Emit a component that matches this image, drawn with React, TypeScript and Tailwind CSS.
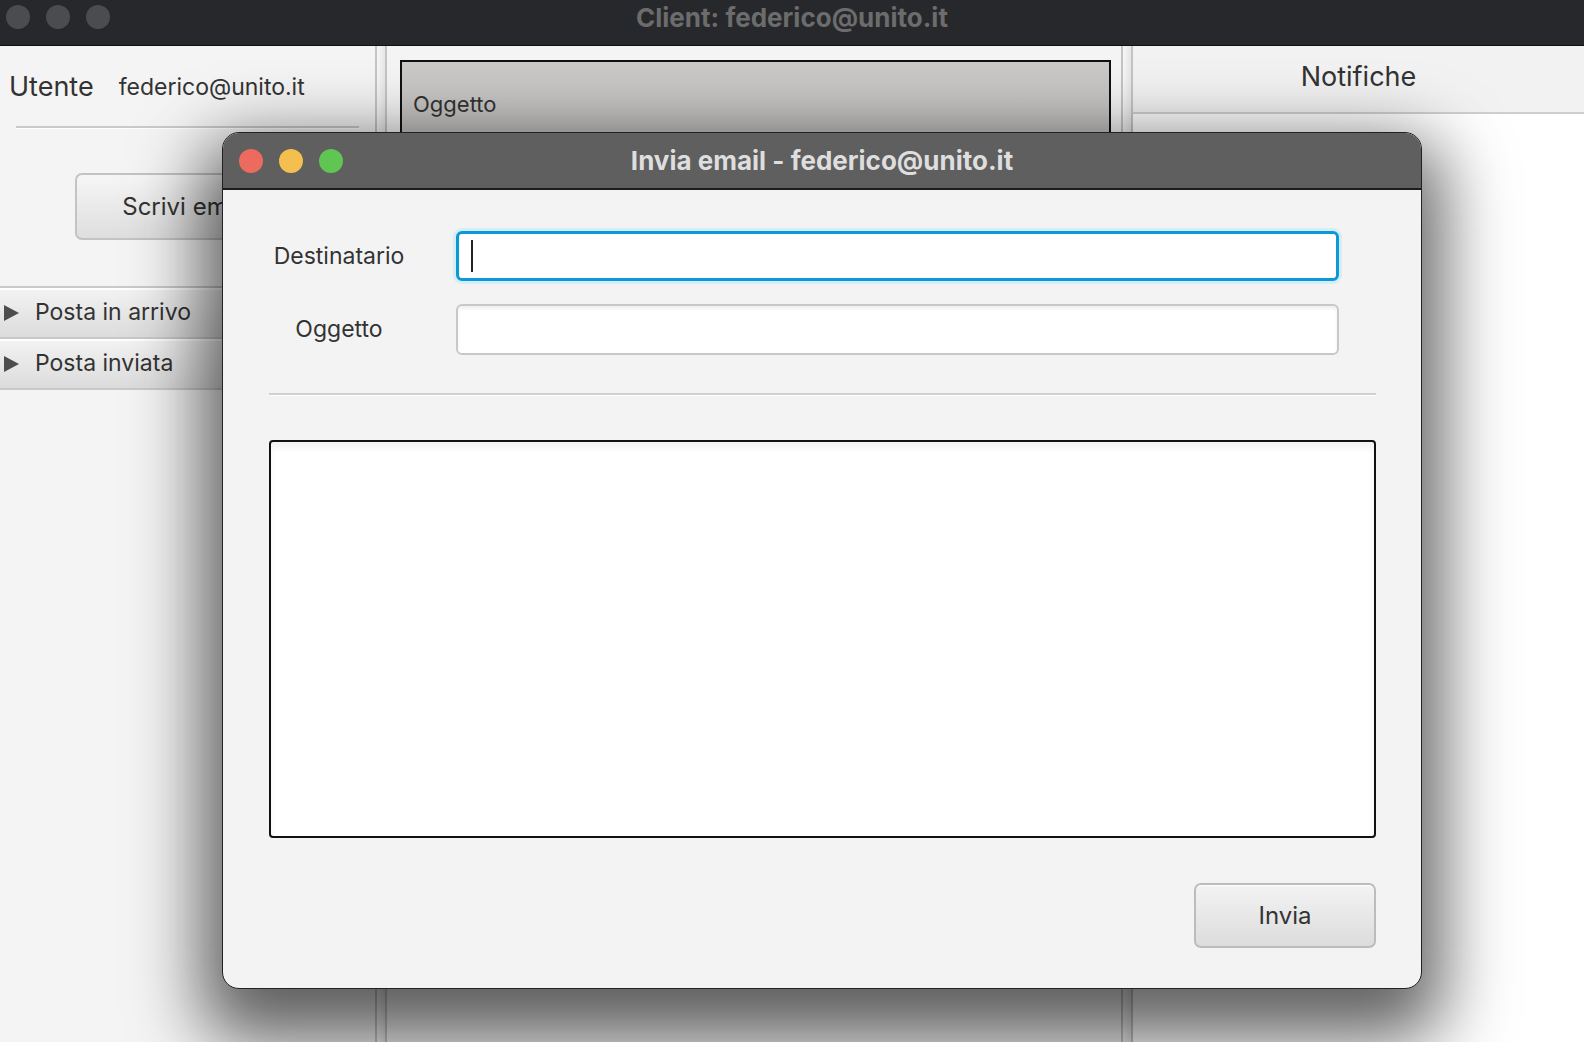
import React from 'react';

const font = { fontFamily: 'Inter, "Noto Sans", sans-serif' };

const Lights: React.FC<{ colors: string[] }> = ({ colors }) => (
  <div className="flex items-center gap-4">
    {colors.map((c, i) => (
      <span key={i} className={`h-[24px] w-[24px] rounded-full ${c}`} />
    ))}
  </div>
);

const TreeRow: React.FC<{ label: string }> = ({ label }) => (
  <div className="flex h-[51px] items-center gap-4 border-t-2 border-[#c9c9c9] bg-gradient-to-b from-[#f3f3f3] to-[#dcdcdc] pl-[4px] shadow-[inset_0_2px_0_#ffffff]">
    <svg width="15" height="16" viewBox="0 0 15 16">
      <path d="M0 0 L15 8 L0 16 Z" fill="#4d4d4d" />
    </svg>
    <span className="text-[23px] text-[#333]">{label}</span>
  </div>
);

const Divider = () => (
  <div className="flex w-[12px] shrink-0 bg-[#ececec]">
    <div className="w-[2px] bg-[#c4c4c4]" />
    <div className="flex-1 bg-gradient-to-r from-[#f6f6f6] to-[#e6e6e6]" />
    <div className="w-[2px] bg-[#c4c4c4]" />
  </div>
);

function ComposeDialog() {
  return (
    <div className="absolute left-[222px] top-[132px] flex h-[857px] w-[1200px] flex-col overflow-hidden rounded-[17px] border border-[#222] bg-[#f3f3f3] shadow-[0_30px_70px_20px_rgba(0,0,0,0.62)]">
      {/* title bar */}
      <div className="relative flex h-[57px] shrink-0 items-center border-b-2 border-[#1c1c1c] bg-[#5f5f5f] pl-[16px]">
        <Lights colors={['bg-[#ed6a5e]', 'bg-[#f5bf4f]', 'bg-[#61c554]']} />
        <div className="absolute inset-0 flex items-center justify-center text-[26px] font-bold text-[#dedede]">
          Invia email - federico@unito.it
        </div>
      </div>

      <div className="flex flex-1 flex-col pl-[46px] pr-[45px] pt-[41px]">
        <div className="grid grid-cols-[140px_1fr] items-center gap-x-[47px] gap-y-[23px] pr-[37px]">
          <label className="text-center text-[23px] text-[#333]">Destinatario</label>
          <div className="flex h-[50px] items-center rounded-[6px] border-[3px] border-[#0b9ad6] bg-white pl-[12px] shadow-[0_0_0_3px_#d6ecf7]">
            <span className="h-[32px] w-[2px] bg-[#222]" />
          </div>
          <label className="text-center text-[23px] text-[#333]">Oggetto</label>
          <div className="h-[51px] rounded-[6px] border-2 border-[#c8c8c8] bg-white shadow-[inset_0_3px_3px_rgba(0,0,0,0.06)]" />
        </div>

        <div className="mt-[38px] h-[2px] bg-[#d0d0d0] shadow-[0_1px_0_#ffffff]" />

        <div className="mt-[45px] h-[398px] rounded-[4px] border-2 border-[#111] bg-white shadow-[inset_0_6px_6px_rgba(0,0,0,0.05)]" />

        <div className="mt-[45px] flex justify-end">
          <button className="h-[65px] w-[182px] rounded-[7px] border-2 border-[#bcbcbc] bg-gradient-to-b from-[#f3f3f3] to-[#dcdcdc] text-[24px] text-[#333] shadow-[inset_0_1px_0_#ffffff]">
            Invia
          </button>
        </div>
      </div>
    </div>
  );
}

export default function App() {
  return (
    <div className="relative flex h-[1042px] w-[1584px] flex-col overflow-hidden bg-[#f4f4f4]" style={font}>
      {/* main window title bar */}
      <div className="relative flex h-[46px] shrink-0 items-start border-b border-[#111] bg-[#27282b] pl-[6px] pt-[5px]">
        <div className="flex items-center gap-4">
          <span className="h-[24px] w-[24px] rounded-full bg-[#4b4c4f]" />
          <span className="h-[24px] w-[24px] rounded-full bg-[#4b4c4f]" />
          <span className="h-[24px] w-[24px] rounded-full bg-[#4b4c4f]" />
        </div>
        <div className="absolute inset-x-0 top-0 flex h-[34px] items-center justify-center text-[26px] font-bold text-[#6c6c6c]">
          Client: federico@unito.it
        </div>
      </div>

      <div className="flex flex-1">
        {/* left panel */}
        <div className="flex w-[375px] shrink-0 flex-col bg-[#f4f4f4]">
          <div className="flex h-[80px] items-center gap-[25px] pl-[9px] pt-[2px]">
            <span className="text-[27px] text-[#333]">Utente</span>
            <span className="text-[23px] text-[#333]">federico@unito.it</span>
          </div>
          <div className="mx-[16px] h-[2px] bg-[#c9c9c9] shadow-[0_1px_0_#ffffff]" />
          <div className="mt-[45px] flex justify-center">
            <button className="h-[67px] w-[226px] rounded-[7px] border-2 border-[#c3c3c3] bg-gradient-to-b from-[#f6f6f6] to-[#dedede] text-[24px] text-[#333]">
              Scrivi email
            </button>
          </div>
          <div className="mt-[46px] border-b-2 border-[#c9c9c9]">
            <TreeRow label="Posta in arrivo" />
            <TreeRow label="Posta inviata" />
          </div>
        </div>

        <Divider />

        {/* middle panel */}
        <div className="flex flex-1 flex-col bg-[#f4f4f4] pb-[80px] pl-[13px] pr-[10px] pt-[14px]">
          <div className="flex flex-1 flex-col border-2 border-[#111] bg-white">
            <div className="flex h-[80px] items-center bg-gradient-to-b from-[#cac9c7] to-[#c3c2c0] pl-[11px] pt-[4px] text-[22px] text-[#333]">
              Oggetto
            </div>
          </div>
        </div>

        <Divider />

        {/* right panel */}
        <div className="flex w-[451px] shrink-0 flex-col">
          <div className="flex h-[68px] items-center justify-center border-b-2 border-[#cfcfcf] bg-[#f2f2f2] pb-[4px] text-[27px] text-[#333]">
            Notifiche
          </div>
          <div className="flex-1 bg-white" />
        </div>
      </div>

      <ComposeDialog />
    </div>
  );
}
